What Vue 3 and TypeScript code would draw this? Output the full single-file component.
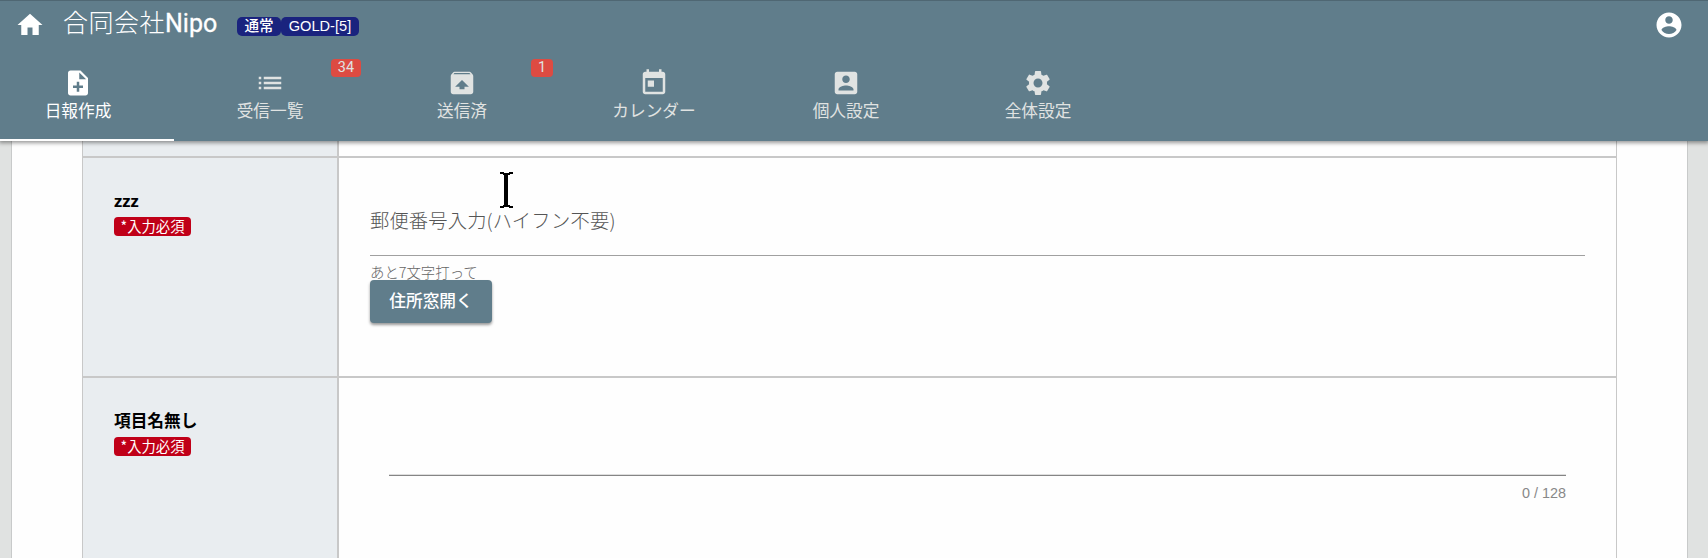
<script setup lang="ts">
interface Tab {
  label: string
  icon: string
  badge?: string
}

const icons = {
  home: 'M10 20v-6h4v6h5v-8h3L12 3 2 12h3v8z',
  account:
    'M12 2C6.48 2 2 6.48 2 12s4.48 10 10 10 10-4.48 10-10S17.52 2 12 2zm0 3c1.66 0 3 1.34 3 3s-1.34 3-3 3-3-1.34-3-3 1.34-3 3-3zm0 14.2c-2.5 0-4.71-1.28-6-3.22.03-1.99 4-3.08 6-3.08 1.99 0 5.97 1.09 6 3.08-1.29 1.94-3.5 3.22-6 3.22z',
}

const tabs: Tab[] = [
  {
    label: '日報作成',
    icon: 'M14 2H6c-1.1 0-1.99.9-1.99 2L4 20c0 1.1.89 2 1.99 2H18c1.1 0 2-.9 2-2V8l-6-6zm2 14h-3v3h-2v-3H8v-2h3v-3h2v3h3v2zm-3-7V3.5L18.5 9H13z',
  },
  {
    label: '受信一覧',
    icon: 'M3 13h2v-2H3v2zm0 4h2v-2H3v2zm0-8h2V7H3v2zm4 4h14v-2H7v2zm0 4h14v-2H7v2zM7 7v2h14V7H7z',
    badge: '34',
  },
  {
    label: '送信済',
    icon: 'M20.55 5.22l-1.39-1.68C18.88 3.21 18.47 3 18 3H6c-.47 0-.88.21-1.15.55L3.46 5.22C3.17 5.57 3 6.01 3 6.5V19c0 1.1.89 2 2 2h14c1.1 0 2-.9 2-2V6.5c0-.49-.17-.93-.45-1.28zM12 9.5l5.5 5.5H14v2h-4v-2H6.5L12 9.5zM5.12 5l.82-1h12l.93 1H5.12z',
    badge: '1',
  },
  {
    label: 'カレンダー',
    icon: 'M19 3h-1V1h-2v2H8V1H6v2H5c-1.11 0-1.99.9-1.99 2L3 19c0 1.1.89 2 2 2h14c1.1 0 2-.9 2-2V5c0-1.1-.9-2-2-2zm0 16H5V8h14v11zM7 10h5v5H7z',
  },
  {
    label: '個人設定',
    icon: 'M3 5v14c0 1.1.89 2 2 2h14c1.1 0 2-.9 2-2V5c0-1.1-.9-2-2-2H5c-1.11 0-2 .9-2 2zm12 4c0 1.66-1.34 3-3 3s-3-1.34-3-3 1.34-3 3-3 3 1.34 3 3zm-9 8c0-2 4-3.1 6-3.1s6 1.1 6 3.1v1H6v-1z',
  },
  {
    label: '全体設定',
    icon: 'M19.14 12.94c.04-.3.06-.61.06-.94 0-.32-.02-.64-.07-.94l2.03-1.58c.18-.14.23-.41.12-.61l-1.92-3.32c-.12-.22-.37-.29-.59-.22l-2.39.96c-.5-.38-1.03-.7-1.62-.94l-.36-2.54c-.04-.24-.24-.41-.48-.41h-3.84c-.24 0-.43.17-.47.41l-.36 2.54c-.59.24-1.13.57-1.62.94l-2.39-.96c-.22-.08-.47 0-.59.22L2.74 8.87c-.12.21-.08.47.12.61l2.03 1.58c-.05.3-.09.63-.09.94s.02.64.07.94l-2.03 1.58c-.18.14-.23.41-.12.61l1.92 3.32c.12.22.37.29.59.22l2.39-.96c.5.38 1.03.7 1.62.94l.36 2.54c.05.24.24.41.48.41h3.84c.24 0 .44-.17.47-.41l.36-2.54c.59-.24 1.13-.56 1.62-.94l2.39.96c.22.08.47 0 .59-.22l1.92-3.32c.12-.22.07-.47-.12-.61l-2.01-1.58zM12 15.6c-1.98 0-3.6-1.62-3.6-3.6s1.62-3.6 3.6-3.6 3.6 1.62 3.6 3.6-1.62 3.6-3.6 3.6z',
  },
]
const active = 0
</script>

<template>
  <div class="app">
    <header class="header">
      <div class="toolbar">
        <svg class="icon" viewBox="0 0 24 24"><path :d="icons.home" /></svg>
        <h1 class="title"><span class="title-jp">合同会社</span>Nipo</h1>
        <span class="chip chip-jp">通常</span>
        <span class="chip chip-plan">GOLD-[5]</span>
        <svg class="icon account" viewBox="0 0 24 24"><path :d="icons.account" /></svg>
      </div>
      <nav class="tabs">
        <a v-for="(tab, i) in tabs" :key="tab.label" class="tab" :class="{ active: i === active }">
          <svg class="icon" viewBox="0 0 24 24"><path :d="tab.icon" /></svg>
          <span class="tab-label">{{ tab.label }}</span>
          <span v-if="tab.badge" class="badge">{{ tab.badge }}</span>
        </a>
      </nav>
    </header>

    <main class="paper">
      <div class="table">
        <section class="row stub">
          <div class="name"></div>
          <div class="value"></div>
        </section>
        <section class="row">
          <div class="name">
            <div class="heading">zzz</div>
            <span class="required">*入力必須</span>
          </div>
          <div class="value">
            <div class="postal">郵便番号入力(ハイフン不要)</div>
            <div class="hint">あと7文字打って</div>
            <button class="button" type="button">住所窓開く</button>
          </div>
        </section>
        <section class="row last">
          <div class="name">
            <div class="heading">項目名無し</div>
            <span class="required">*入力必須</span>
          </div>
          <div class="value">
            <div class="blank"></div>
            <div class="counter">0 / 128</div>
          </div>
        </section>
      </div>
    </main>

    <svg class="cursor" viewBox="0 0 13 36">
      <path d="M0 0H4V1H9V0H13V2H10V3H8V33H10V34H13V36H9V35H4V36H0V34H3V33H4V3H3V2H0Z" />
    </svg>
  </div>
</template>

<style>
body {
  background: #e0e2e1;
}
</style>

<style scoped>
.app {
  position: relative;
  box-sizing: border-box;
  height: 558px;
  overflow: hidden;
  display: flex;
  flex-direction: column;
  font-family: 'Liberation Sans', 'Noto Sans CJK JP', sans-serif;
}
.header {
  position: relative;
  z-index: 1;
  box-sizing: border-box;
  flex: none;
  height: 141px;
  border-top: 1px solid #4f6773;
  background: #607d8b;
  color: #fff;
  box-shadow: 0 1px 4px 1px rgba(0, 0, 0, 0.4);
}
.toolbar {
  display: flex;
  align-items: center;
  height: 47px;
  padding: 0 24px 0 15px;
}
.icon {
  flex: none;
  width: 30px;
  height: 30px;
  fill: currentColor;
}
.title {
  margin: -2px 19px 0 18px;
  width: 155px;
  flex: none;
  white-space: nowrap;
  font: 400 25px/40px Roboto, 'Noto Sans CJK JP', sans-serif;
  -webkit-text-stroke: 0.3px currentColor;
}
.title-jp {
  font-weight: 300;
  letter-spacing: 0.5px;
  -webkit-text-stroke: 0;
}
.chip {
  box-sizing: border-box;
  height: 19px;
  margin-top: 4px;
  border-radius: 5px;
  background: #1a237e;
  text-align: center;
  white-space: nowrap;
  font-size: 14.6px;
  line-height: 19px;
}
.chip-jp {
  width: 44px;
  font-weight: 500;
}
.chip-plan {
  width: 78px;
}
.account {
  margin-left: auto;
}
.tabs {
  display: flex;
  height: 93px;
  margin-left: -18px;
}
.tab {
  position: relative;
  box-sizing: border-box;
  flex: none;
  width: 192px;
  padding-top: 20px;
  display: flex;
  flex-direction: column;
  align-items: center;
  color: #e0e3e2;
}
.tab.active {
  color: #fff;
  border-bottom: 2px solid #fff;
}
.tab-label {
  font-size: 16.7px;
  line-height: 28px;
  white-space: nowrap;
}
.badge {
  position: absolute;
  top: 11px;
  right: 5px;
  height: 18px;
  padding: 0 7px;
  border-radius: 4px;
  background: #dd4b42;
  font: 400 14.4px/18px Roboto, sans-serif;
}
.paper {
  flex: 1;
  display: flex;
  margin: 0 20px 0 11px;
  padding: 0 70px;
  border: solid #c8caca;
  border-width: 0 1px;
  background: #fefefe;
}
.table {
  flex: 1;
  display: flex;
  flex-direction: column;
  border: solid #c8c8c8;
  border-width: 0 1px;
}
.row {
  box-sizing: border-box;
  flex: none;
  display: flex;
  height: 220px;
  border-bottom: 2px solid #c8c8c8;
}
.stub {
  height: 17px;
}
.last {
  flex: 1;
  border-bottom: 0;
}
.name {
  box-sizing: border-box;
  width: 256px;
  border-right: 2px solid #c8c8c8;
  background: #e9edf0;
}
.row:not(.stub) .name {
  padding: 30px 0 0 31px;
}
.heading {
  height: 29px;
  color: #000;
  font: 700 16.7px/25px 'Noto Sans', 'Noto Sans CJK JP', sans-serif;
}
.required {
  display: block;
  width: 77px;
  height: 19px;
  border-radius: 4px;
  background: #c00018;
  color: #fff;
  text-align: center;
  font: 14.3px/18px 'Noto Sans CJK JP', sans-serif;
}
.value {
  flex: 1;
  padding: 0 31px;
}
.postal {
  box-sizing: border-box;
  height: 98px;
  padding-top: 47px;
  border-bottom: 1px solid #a0a0a0;
  color: #555;
  letter-spacing: 0.15px;
  font: 300 19.3px/30px 'Noto Sans CJK JP', sans-serif;
}
.hint {
  height: 24px;
  color: #666;
  font: 300 14.4px/31px 'Noto Sans CJK JP', sans-serif;
}
.button {
  position: relative;
  display: block;
  width: 122px;
  height: 43px;
  padding: 0 0 4px;
  border: 0;
  border-radius: 4px;
  background: #607d8b;
  color: #fff;
  box-shadow: 0 2px 3px rgba(0, 0, 0, 0.4);
  font: 500 16.7px/38px 'Noto Sans CJK JP', sans-serif;
}
.blank {
  box-sizing: border-box;
  height: 98px;
  margin: 0 19px;
  border-bottom: 1px solid #858585;
  box-shadow: inset 0 -1px #dedede;
}
.counter {
  margin: 7px 19px 0;
  color: #888;
  text-align: right;
  font-size: 14.4px;
  line-height: 20px;
}
.cursor {
  position: absolute;
  z-index: 2;
  left: 500px;
  top: 172px;
  width: 13px;
  height: 36px;
}
</style>
